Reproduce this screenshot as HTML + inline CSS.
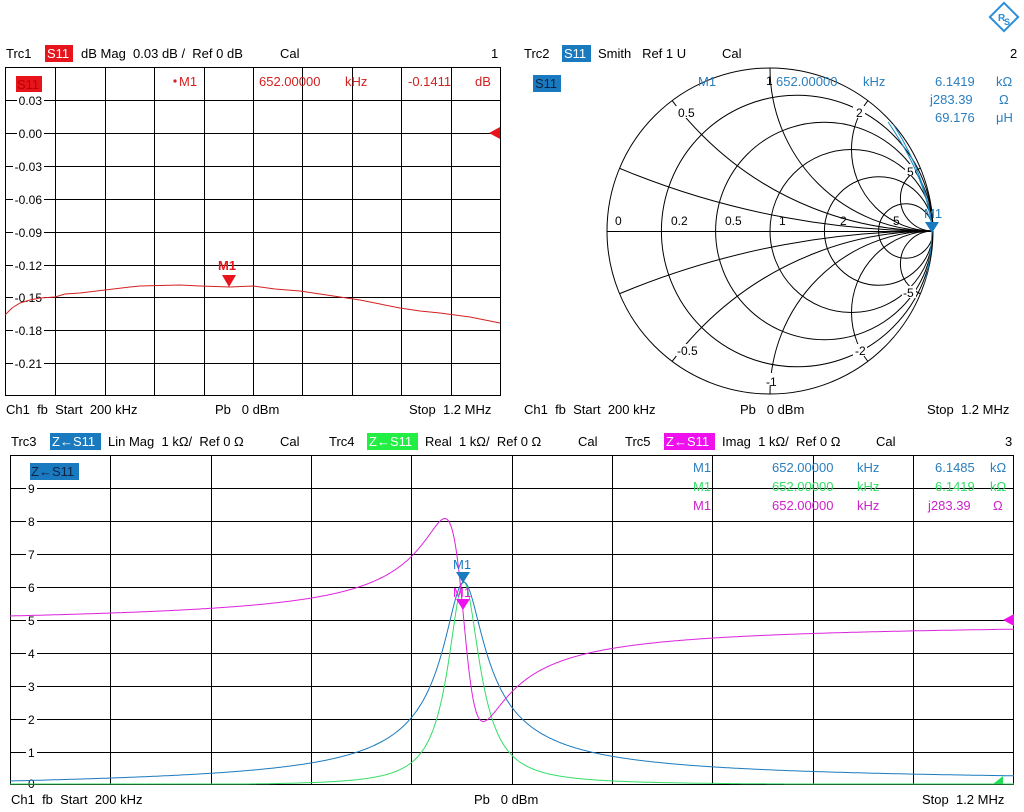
<!DOCTYPE html>
<html><head><meta charset="utf-8">
<style>
html,body{margin:0;padding:0;background:#fff;width:1024px;height:812px;overflow:hidden;}
body{position:relative;font-family:"Liberation Sans",Arial,sans-serif;}
svg{position:absolute;left:0;top:0;display:block;}
text{font-family:"Liberation Sans",Arial,sans-serif;font-size:13px;white-space:pre;}
</style></head>
<body>
<svg width="1024" height="812" viewBox="0 0 1024 812" xmlns="http://www.w3.org/2000/svg" xml:space="preserve">
<defs>
<clipPath id="sc"><circle cx="770" cy="231" r="163"/></clipPath>
</defs>
<g transform="translate(1004,17) rotate(45)">
<rect x="-10" y="-10" width="20" height="20" fill="none" stroke="#2a8fd8" stroke-width="2"/>
</g>
<text x="998" y="21" fill="#2a8fd8" style="font-size:10px;font-weight:bold">R</text>
<text x="1004" y="25" fill="#2a8fd8" style="font-size:9px;font-weight:bold">S</text>

<!-- TOP LEFT -->
<text x="6" y="58">Trc1</text>
<rect x="45" y="45" width="28" height="17" fill="#e8141c"/>
<text x="47" y="58" fill="#fff">S11</text>
<text x="81" y="58">dB Mag  0.03 dB /  Ref 0 dB</text>
<text x="280" y="58">Cal</text>
<text x="491" y="58">1</text>

<g stroke="#000" stroke-width="1" fill="none">
<rect x="5.5" y="67.5" width="495" height="328"/>
<path d="M55.5 67v329M105.5 67v329M154.5 67v329M204.5 67v329M253.5 67v329M302.5 67v329M352.5 67v329M401.5 67v329M451.5 67v329"/>
<path d="M5 100.5h495M5 133.5h495M5 166.5h495M5 199.5h495M5 232.5h495M5 265.5h495M5 297.5h495M5 330.5h495M5 363.5h495"/>
</g>
<g fill="#fff">
<rect x="17" y="93" width="27" height="14"/><rect x="17" y="126" width="27" height="14"/>
<rect x="13" y="159" width="31" height="14"/><rect x="13" y="192" width="31" height="14"/>
<rect x="13" y="225" width="31" height="14"/><rect x="13" y="258" width="31" height="14"/>
<rect x="13" y="290" width="31" height="14"/><rect x="13" y="323" width="31" height="14"/>
<rect x="13" y="356" width="31" height="14"/>
</g>
<g text-anchor="end">
<text x="42" y="105" style="font-size:12px">0.03</text>
<text x="42" y="138" style="font-size:12px">0.00</text>
<text x="42" y="171" style="font-size:12px">-0.03</text>
<text x="42" y="204" style="font-size:12px">-0.06</text>
<text x="42" y="237" style="font-size:12px">-0.09</text>
<text x="42" y="270" style="font-size:12px">-0.12</text>
<text x="42" y="302" style="font-size:12px">-0.15</text>
<text x="42" y="335" style="font-size:12px">-0.18</text>
<text x="42" y="368" style="font-size:12px">-0.21</text>
</g>
<rect x="16" y="76" width="26" height="16" fill="#e8141c"/>
<text x="17" y="89" fill="#b00">S11</text>
<g fill="#d42020">
<circle cx="175" cy="81" r="1.6"/>
<text x="179" y="86">M1</text>
<text x="259" y="86">652.00000</text>
<text x="345" y="86">kHz</text>
<text x="408" y="86">-0.1411</text>
<text x="475" y="86">dB</text>
</g>
<polyline fill="none" stroke="#d42020" stroke-width="1" points="5,315 12,308 20,303 30,300 40,298 55,297 65,294 80,293 105,290 130,287 140,286 180,285 200,286 230,287 253,286 275,289 300,291 320,294 340,297 360,300 380,304 400,308 420,311 440,313 470,317 500,323"/>
<polygon points="222,275 236,275 229,287" fill="#e8141c"/>
<text x="218" y="270" fill="#e8141c" style="font-weight:bold">M1</text>
<polygon points="489,133 500,127 500,139" fill="#e8141c"/>
<text x="6" y="414">Ch1  fb  Start  200 kHz</text>
<text x="215" y="414">Pb   0 dBm</text>
<text x="409" y="414">Stop  1.2 MHz</text>

<!-- SMITH -->
<text x="524" y="58">Trc2</text>
<rect x="562" y="45" width="29" height="17" fill="#1a7abf"/>
<text x="564" y="58" fill="#fff">S11</text>
<text x="598" y="58">Smith   Ref 1 U</text>
<text x="722" y="58">Cal</text>
<text x="1010" y="58">2</text>
<rect x="533" y="75" width="28" height="17" fill="#1a7abf"/>
<text x="535" y="88" fill="#124">S11</text>

<g stroke="#000" stroke-width="1" fill="none">
<circle cx="770" cy="231" r="163"/>
<line x1="607" y1="231.5" x2="933" y2="231.5"/>
<g clip-path="url(#sc)">
<circle cx="797.2" cy="231" r="135.8"/>
<circle cx="824.3" cy="231" r="108.7"/>
<circle cx="851.5" cy="231" r="81.5"/>
<circle cx="878.7" cy="231" r="54.3"/>
<circle cx="905.8" cy="231" r="27.2"/>
<circle cx="933" cy="-584" r="815"/>
<circle cx="933" cy="1046" r="815"/>
<circle cx="933" cy="-95" r="326"/>
<circle cx="933" cy="557" r="326"/>
<circle cx="933" cy="68" r="163"/>
<circle cx="933" cy="394" r="163"/>
<circle cx="933" cy="149.5" r="81.5"/>
<circle cx="933" cy="312.5" r="81.5"/>
<circle cx="933" cy="198.4" r="32.6"/>
<circle cx="933" cy="263.6" r="32.6"/>
</g>
</g>
<g fill="#fff"><rect x="676" y="106" width="18" height="12"/><rect x="853" y="106" width="12" height="12"/><rect x="905" y="164" width="10" height="12"/><rect x="676" y="344" width="22" height="12"/><rect x="853" y="344" width="14" height="12"/><rect x="902" y="286" width="14" height="12"/><rect x="764" y="373" width="14" height="12"/></g>
<g>
<text x="615" y="225" style="font-size:12px">0</text>
<text x="671" y="225" style="font-size:12px">0.2</text>
<text x="725" y="225" style="font-size:12px">0.5</text>
<text x="779" y="225" style="font-size:12px">1</text>
<text x="840" y="225" style="font-size:12px">2</text>
<text x="893" y="225" style="font-size:12px">5</text>
<text x="678" y="117" style="font-size:12px">0.5</text>
<text x="856" y="117" style="font-size:12px">2</text>
<text x="907" y="176" style="font-size:12px">5</text>
<text x="766" y="85" style="font-size:12px">1</text>
<text x="677" y="355" style="font-size:12px">-0.5</text>
<text x="855" y="355" style="font-size:12px">-2</text>
<text x="903" y="297" style="font-size:12px">-5</text>
<text x="766" y="386" style="font-size:12px">-1</text>
</g>
<g clip-path="url(#sc)" fill="none" stroke="#1a8abf" stroke-width="1">
<path d="M888 122 Q928 180 932 231 Q930 280 915 310"/>
<path d="M893 124 Q926 175 933 231"/>
</g>
<polygon points="925,222 939,222 932,233" fill="#1a7abf"/>
<text x="924" y="218" fill="#1a7abf">M1</text>
<g fill="#2a7fbf">
<text x="698" y="86">M1</text>
<text x="776" y="86">652.00000</text>
<text x="863" y="86">kHz</text>
<text x="935" y="86">6.1419</text>
<text x="996" y="86">kΩ</text>
<text x="930" y="104">j283.39</text>
<text x="999" y="104">Ω</text>
<text x="935" y="122">69.176</text>
<text x="996" y="122">μH</text>
</g>
<text x="524" y="414">Ch1  fb  Start  200 kHz</text>
<text x="740" y="414">Pb   0 dBm</text>
<text x="927" y="414">Stop  1.2 MHz</text>

<!-- BOTTOM -->
<text x="11" y="446">Trc3</text>
<rect x="50" y="433" width="51" height="17" fill="#1a7abf"/>
<text x="52" y="446" fill="#fff">Z←S11</text>
<text x="108" y="446">Lin Mag  1 kΩ/  Ref 0 Ω</text>
<text x="280" y="446">Cal</text>
<text x="329" y="446">Trc4</text>
<rect x="367" y="433" width="51" height="17" fill="#22ee44"/>
<text x="369" y="446" fill="#fff">Z←S11</text>
<text x="425" y="446">Real  1 kΩ/  Ref 0 Ω</text>
<text x="578" y="446">Cal</text>
<text x="625" y="446">Trc5</text>
<rect x="664" y="433" width="51" height="17" fill="#ee11ee"/>
<text x="666" y="446" fill="#fff">Z←S11</text>
<text x="722" y="446">Imag  1 kΩ/  Ref 0 Ω</text>
<text x="876" y="446">Cal</text>
<text x="1005" y="446">3</text>

<g stroke="#000" stroke-width="1" fill="none">
<rect x="10.5" y="455.5" width="1003" height="329"/>
<path d="M110.5 455v330M211.5 455v330M311.5 455v330M411.5 455v330M512.5 455v330M612.5 455v330M712.5 455v330M813.5 455v330M913.5 455v330"/>
<path d="M10 488.5h1004M10 521.5h1004M10 554.5h1004M10 587.5h1004M10 620.5h1004M10 653.5h1004M10 686.5h1004M10 719.5h1004M10 752.5h1004"/>
</g>
<g fill="#fff">
<rect x="26" y="481" width="11" height="14"/><rect x="26" y="514" width="11" height="14"/><rect x="26" y="547" width="11" height="14"/><rect x="26" y="580" width="11" height="14"/><rect x="26" y="613" width="11" height="14"/><rect x="26" y="646" width="11" height="14"/><rect x="26" y="679" width="11" height="14"/><rect x="26" y="712" width="11" height="14"/><rect x="26" y="745" width="11" height="14"/><rect x="26" y="778" width="11" height="6"/>
</g>
<g>
<text x="28" y="493" style="font-size:12px">9</text><text x="28" y="526" style="font-size:12px">8</text><text x="28" y="559" style="font-size:12px">7</text><text x="28" y="592" style="font-size:12px">6</text><text x="28" y="625" style="font-size:12px">5</text><text x="28" y="658" style="font-size:12px">4</text><text x="28" y="691" style="font-size:12px">3</text><text x="28" y="724" style="font-size:12px">2</text><text x="28" y="757" style="font-size:12px">1</text><text x="28" y="788" style="font-size:12px">0</text>
</g>
<rect x="30" y="463" width="49" height="17" fill="#1a7abf"/>
<text x="31" y="476" fill="#124">Z←S11</text>
<g id="curves"></g>
<polygon points="456,572 470,572 463,583" fill="#1a7abf"/>
<text x="453" y="569" fill="#1a7abf">M1</text>
<polygon points="456,599 470,599 463,610" fill="#ee11ee"/>
<text x="453" y="597" fill="#ee11ee">M1</text>
<polygon points="1003,620 1014,614 1014,626" fill="#ee11ee"/>
<polygon points="993,784 1003,776 1003,784" fill="#22dd55"/>
<g>
<text x="693" y="472" fill="#2a7fbf">M1</text><text x="772" y="472" fill="#2a7fbf">652.00000</text><text x="857" y="472" fill="#2a7fbf">kHz</text><text x="935" y="472" fill="#2a7fbf">6.1485</text><text x="990" y="472" fill="#2a7fbf">kΩ</text>
<text x="693" y="491" fill="#33dd66">M1</text><text x="772" y="491" fill="#33dd66">652.00000</text><text x="857" y="491" fill="#33dd66">kHz</text><text x="935" y="491" fill="#33dd66">6.1419</text><text x="990" y="491" fill="#33dd66">kΩ</text>
<text x="693" y="510" fill="#cc22cc">M1</text><text x="772" y="510" fill="#cc22cc">652.00000</text><text x="857" y="510" fill="#cc22cc">kHz</text><text x="928" y="510" fill="#cc22cc">j283.39</text><text x="993" y="510" fill="#cc22cc">Ω</text>
</g>
<text x="11" y="804">Ch1  fb  Start  200 kHz</text>
<text x="474" y="804">Pb   0 dBm</text>
<text x="922" y="804">Stop  1.2 MHz</text>
</svg>
<script>
(function(){
var ns="http://www.w3.org/2000/svg",g=document.getElementById("curves");
var R=6.15,Q=17,f0=652,b="",gr="",m="";
for(var x=10;x<=1014;x+=1){
 var f=200+(x-10)*1000/1004;
 var u=Q*(f/f0-f0/f);
 var d=1+u*u;
 var mag=R/Math.sqrt(d),re=R/d,im=5-R*u/d;
 var c=(x==10?"M":"L");
 b+=c+x+" "+(785-mag*33).toFixed(1);
 gr+=c+x+" "+Math.min(784,785-re*33).toFixed(1);
 m+=c+x+" "+(785-im*33).toFixed(1);
}
[[gr,"#33dd66"],[b,"#1a7abf"],[m,"#dd22dd"]].forEach(function(a){
 var p=document.createElementNS(ns,"path");p.setAttribute("d",a[0]);p.setAttribute("fill","none");p.setAttribute("stroke",a[1]);p.setAttribute("stroke-width","1");g.appendChild(p);});
})();
</script>
</body></html>
